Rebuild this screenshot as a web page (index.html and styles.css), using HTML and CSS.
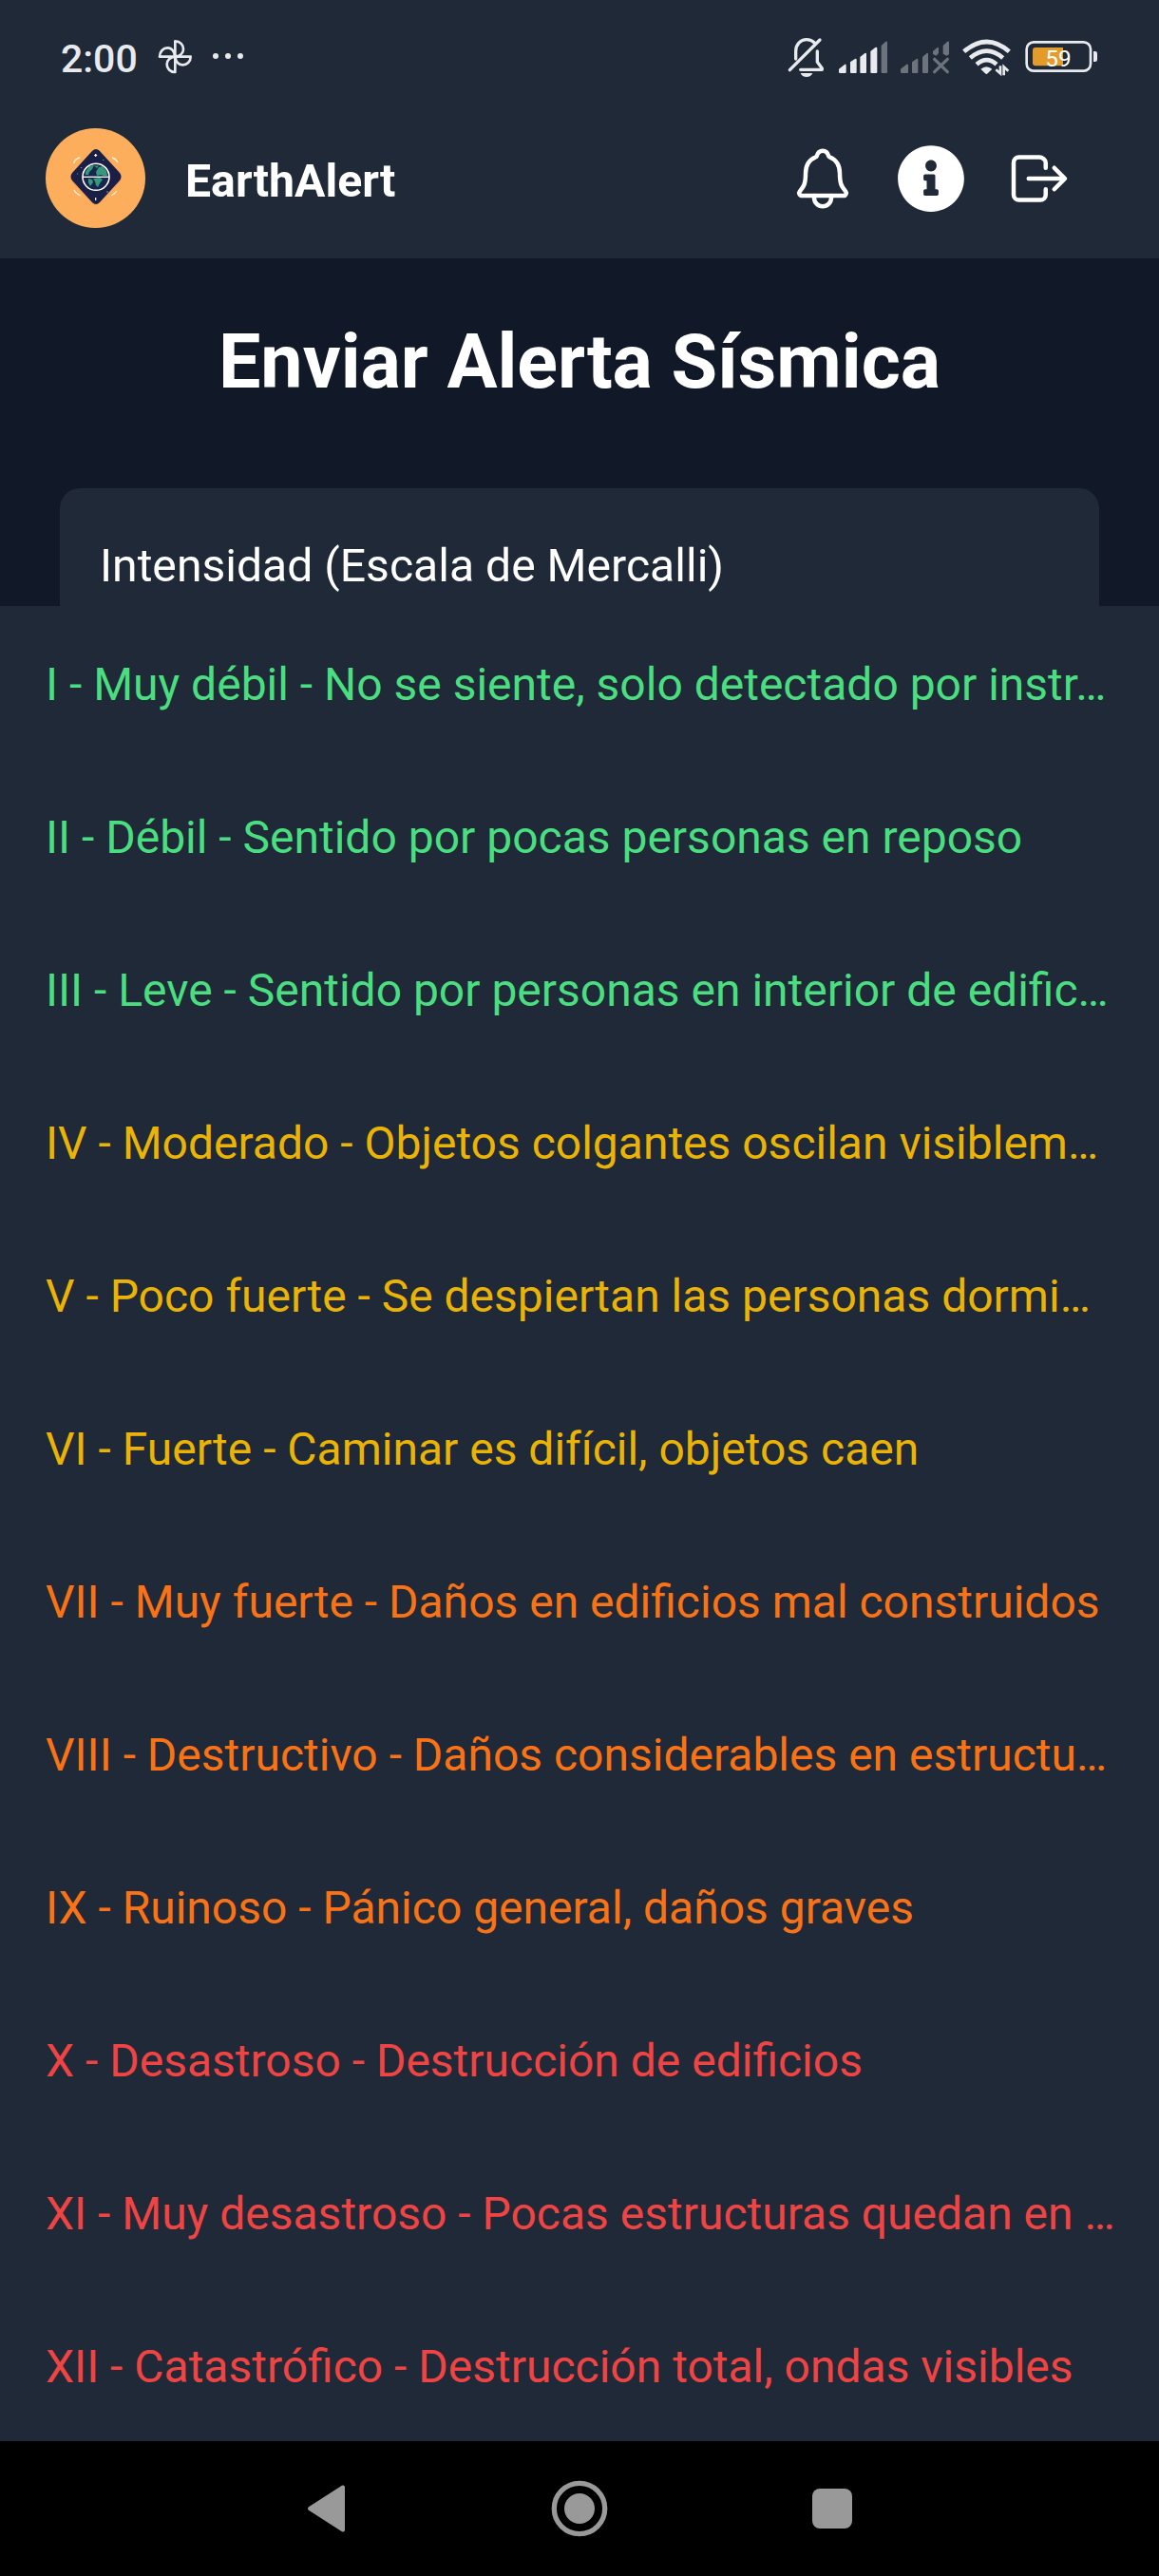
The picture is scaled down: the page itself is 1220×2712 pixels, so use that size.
FILE: index.html
```html
<!DOCTYPE html>
<html lang="es">
<head>
<meta charset="utf-8">
<title>EarthAlert</title>
<link rel="stylesheet" href="styles.css">
</head>
<body>
<div class="status">
  <span class="clock">2:00</span>
  <svg class="notif" width="95" height="80" viewBox="405 0 285 240">
    <g fill="none" stroke="#e8eaed" stroke-width="8" stroke-linejoin="round">
      <path d="M463 118V70C479 70 489 82 489 95C489 108 479 118 463 118Z"/>
      <path d="M464 119H512C512 135 500 145 487 145C474 145 464 135 464 119Z"/>
      <path d="M463 120V168C447 168 437 156 437 143C437 130 447 120 463 120Z"/>
      <path d="M462 119H414C414 103 426 91 439 91C452 91 462 103 462 119Z"/>
    </g>
    <g fill="#e8eaed"><circle cx="591" cy="117" r="9"/><circle cx="630" cy="117" r="9"/><circle cx="669" cy="117" r="9"/></g>
  </svg>
  <svg class="system" width="360" height="80" viewBox="0 0 1080 240">
    <g fill="none" stroke="#e8eaed" stroke-width="10" stroke-linecap="round" stroke-linejoin="round">
      <path d="M64 161L159 66"/>
      <path d="M83 126V102C83 80 98 65 117 65C127 65 136 69 142 75"/>
      <path d="M151 102V136L166 156V160H98"/>
    </g>
    <path d="M98 171H136C133 179 126 183 117 183C108 183 101 179 98 171Z" fill="#e8eaed"/>
    <g fill="#e8eaed">
      <path d="M219 158L238 143Q242 142 242 147V168Q242 171 239 171H223Q219 171 219 167Z"/>
      <path d="M255 136L270 126Q275 124 275 129V168Q275 171 272 171H258Q255 171 255 168Z"/>
      <path d="M286 120L301 108Q306 106 306 111V168Q306 171 303 171H289Q286 171 286 168Z"/>
      <path d="M319 102L334 90Q340 87 340 93V168Q340 171 337 171H322Q319 171 319 168Z"/>
    </g>
    <g fill="#6d737d">
      <path d="M353 84L367 71Q372 69 372 74V168Q372 171 369 171H356Q353 171 353 168Z"/>
      <path d="M414 158L433 143Q438 142 438 147V168Q438 171 435 171H418Q414 171 414 167Z"/>
      <path d="M450 136L464 126Q469 124 469 129V168Q469 171 466 171H453Q450 171 450 168Z"/>
      <path d="M483 120L497 108Q501 106 501 111V168Q501 171 498 171H486Q483 171 483 168Z"/>
      <path d="M516 102L530 90Q534 88 534 93V108L526 116L516 111Z"/>
      <path d="M548 84L562 71Q567 69 567 74V112L559 116L548 110Z"/>
    </g>
    <path d="M521 127L562 167M562 127L521 167" stroke="#6d737d" stroke-width="10" stroke-linecap="round"/>
    <g fill="none" stroke="#e8eaed" stroke-width="14">
      <path d="M614 103Q686 41 757 103"/>
      <path d="M634 123Q686 79 737 123"/>
      <path d="M654 143Q686 116 717 143"/>
    </g>
    <path d="M667 158Q685 143 703 158L689 172Q685 176 681 172Z" fill="#e8eaed"/>
    <path d="M729 148V172L715 160M740 178V151L754 164" fill="none" stroke="#e8eaed" stroke-width="8"/>
    <rect x="812" y="73" width="202" height="91" rx="22" fill="none" stroke="#e8eaed" stroke-width="8"/>
    <path d="M840 90H927V148H840Q831 148 831 139V99Q831 90 840 90Z" fill="#e39b29"/>
    <path d="M1023 102H1028Q1035 102 1035 109V128Q1035 135 1028 135H1023Z" fill="#e8eaed"/>
    <text class="level" x="912" y="150" text-anchor="middle">59</text>
  </svg>
</div>
<header class="bar">
  <svg class="logo" width="105" height="105" viewBox="0 0 105 105">
    <circle cx="52.5" cy="52.5" r="52.5" fill="#fdae5c"/>
    <path d="M48 25Q52.500 21 57 25L78 46Q82 52 78 57L57 78Q52.500 84 48 78L28 57Q24 52 28 47Z" fill="#f0935a" opacity=".6"/>
    <path d="M49 24Q53 20 57 24L78 47Q81 51 78 55L57 78Q53 82 49 78L28 55Q25 51 28 47Z" fill="#1c1f45"/>
    <path d="M29.500 37Q31 32 36 31M70 31Q74 32 76 36M30 65Q32 69 37 71M69 71Q73 69 75 66" fill="none" stroke="#fff0d8" stroke-width="1.300"/>
    <circle cx="53" cy="51.300" r="13" fill="#17264d"/>
    <path d="M42 46L46 40L51 39L49 43L46 46L45 49H42ZM53 46L56 41L60 40L64 45L65 50H61L58 49L54 50ZM51 39.500H56L54 42ZM45 53L49 54L50 57L47 61L45 57ZM50 53L57 52L60 54L57 58L55 62L53 60L52 56Z" fill="#349a7b"/>
    <circle cx="53" cy="51.300" r="14" fill="none" stroke="#fff" stroke-width="1.600"/>
    <path d="M39 51.300H67" stroke="#fff" stroke-width="1.300"/>
    <path d="M52.700 27v3M51.200 28.500h3M52.700 73v3" stroke="#fff" stroke-width="1.200"/>
    <path d="M60 33.500h1.200M37 41.500h1.200M33 48h1M64 67h2" stroke="#49a99b" stroke-width="1.200"/>
  </svg>
  <span class="brand">EarthAlert</span>
  <nav class="actions">
    <svg width="72" height="72" viewBox="0 0 512 512" class="line"><path d="M427.680 351.430C402 320 383.870 304 383.870 217.350 383.870 138 343.350 109.730 310 96c-4.430-1.820-8.600-6-9.950-10.550C294.200 65.540 277.800 48 256 48s-38.210 17.550-44 37.470c-1.350 4.600-5.520 8.710-9.950 10.530-33.390 13.750-73.870 41.920-73.870 121.350C128.130 304 110 320 84.320 351.430 73.680 364.450 83 384 101.610 384h308.880c18.510 0 27.770-19.610 17.190-32.570z"/><path d="M320 384v16a64 64 0 01-128 0v-16"/></svg>
    <svg width="72" height="72" viewBox="0 0 512 512"><path fill="#fff" d="M256 8C119.043 8 8 119.083 8 256c0 136.997 111.043 248 248 248s248-111.003 248-248C504 119.083 392.957 8 256 8zm0 110c23.196 0 42 18.804 42 42s-18.804 42-42 42-42-18.804-42-42 18.804-42 42-42zm56 254c0 6.627-5.373 12-12 12h-88c-6.627 0-12-5.373-12-12v-24c0-6.627 5.373-12 12-12h12v-64h-12c-6.627 0-12-5.373-12-12v-24c0-6.627 5.373-12 12-12h64c6.627 0 12 5.373 12 12v100h12c6.627 0 12 5.373 12 12v24z"/></svg>
    <svg width="72" height="72" viewBox="0 0 512 512" class="line"><path d="M304 336v40a40 40 0 01-40 40H104a40 40 0 01-40-40V136a40 40 0 0140-40h152c22.090 0 48 17.910 48 40v40M368 336l80-80-80-80M176 256h256"/></svg>
  </nav>
</header>
<main class="page">
  <h1 class="title">Enviar Alerta Sísmica</h1>
  <section class="card"><label class="label">Intensidad (Escala de Mercalli)</label></section>
</main>
<ul class="options">
  <li class="green">I - Muy débil - No se siente, solo detectado por instr…</li>
  <li class="green">II - Débil - Sentido por pocas personas en reposo</li>
  <li class="green">III - Leve - Sentido por personas en interior de edific…</li>
  <li class="yellow">IV - Moderado - Objetos colgantes oscilan visiblem…</li>
  <li class="yellow">V - Poco fuerte - Se despiertan las personas dormi…</li>
  <li class="yellow">VI - Fuerte - Caminar es difícil, objetos caen</li>
  <li class="orange">VII - Muy fuerte - Daños en edificios mal construidos</li>
  <li class="orange">VIII - Destructivo - Daños considerables en estructu…</li>
  <li class="orange">IX - Ruinoso - Pánico general, daños graves</li>
  <li class="red">X - Desastroso - Destrucción de edificios</li>
  <li class="red">XI - Muy desastroso - Pocas estructuras quedan en …</li>
  <li class="red">XII - Catastrófico - Destrucción total, ondas visibles</li>
</ul>
<footer class="navbar">
  <svg width="60" height="60" viewBox="0 0 60 60"><path d="M12 30L47 7.500V52.500Z" fill="#999" stroke="#999" stroke-width="4" stroke-linejoin="round"/></svg>
  <svg width="60" height="60" viewBox="0 0 60 60"><circle cx="30" cy="30" r="26.700" fill="none" stroke="#999" stroke-width="5.300"/><circle cx="30" cy="30" r="16" fill="#999"/></svg>
  <svg width="60" height="60" viewBox="0 0 60 60"><rect x="9" y="9" width="42" height="42" rx="8" fill="#999"/></svg>
</footer>
</body>
</html>
```
FILE: styles.css
```css
* { box-sizing: border-box; margin: 0; padding: 0; }
body { width: 1220px; height: 2712px; overflow: hidden; background: #111827; color: #fff; font-family: "Roboto", sans-serif; display: flex; flex-direction: column; }
svg { display: block; flex: none; }
.status { height: 102px; padding: 20px 50px 0 64px; display: flex; background: #1f2937; color: #e8eaed; }
.clock { width: 101px; font-size: 41px; font-weight: 500; line-height: 84px; }
.system { margin-left: auto; }
.level { font: 400 73px "Roboto", sans-serif; fill: #fff; }
.bar { height: 170px; padding: 0 90px 0 48px; display: flex; align-items: center; background: #1f2937; }
.brand { margin-left: 42px; font-size: 48.200px; font-weight: 700; line-height: 56px; padding-top: 7px; }
.actions { margin-left: auto; padding-top: 2px; display: flex; gap: 42px; }
.line { fill: none; stroke: #fff; stroke-width: 32; stroke-linecap: round; stroke-linejoin: round; }
.page { height: 366px; padding: 63px 63px 0; overflow: hidden; }
.title { height: 179px; text-align: center; font-size: 79px; font-weight: 700; line-height: 92px; }
.card { height: 200px; padding: 53px 42px; border-radius: 21px; background: #1f2937; }
.label { display: block; font-size: 48.100px; line-height: 57px; }
.options { list-style: none; background: #1f2937; }
.options li { height: 161px; padding: 4px 0 0 48px; line-height: 157px; font-size: 48px; white-space: nowrap; }
.green { color: #4ade80; }
.yellow { color: #eab308; }
.orange { color: #f97316; }
.red { color: #ef4444; }
.navbar { height: 142px; padding: 0 314px; background: #000; display: flex; align-items: center; justify-content: space-between; }
```
